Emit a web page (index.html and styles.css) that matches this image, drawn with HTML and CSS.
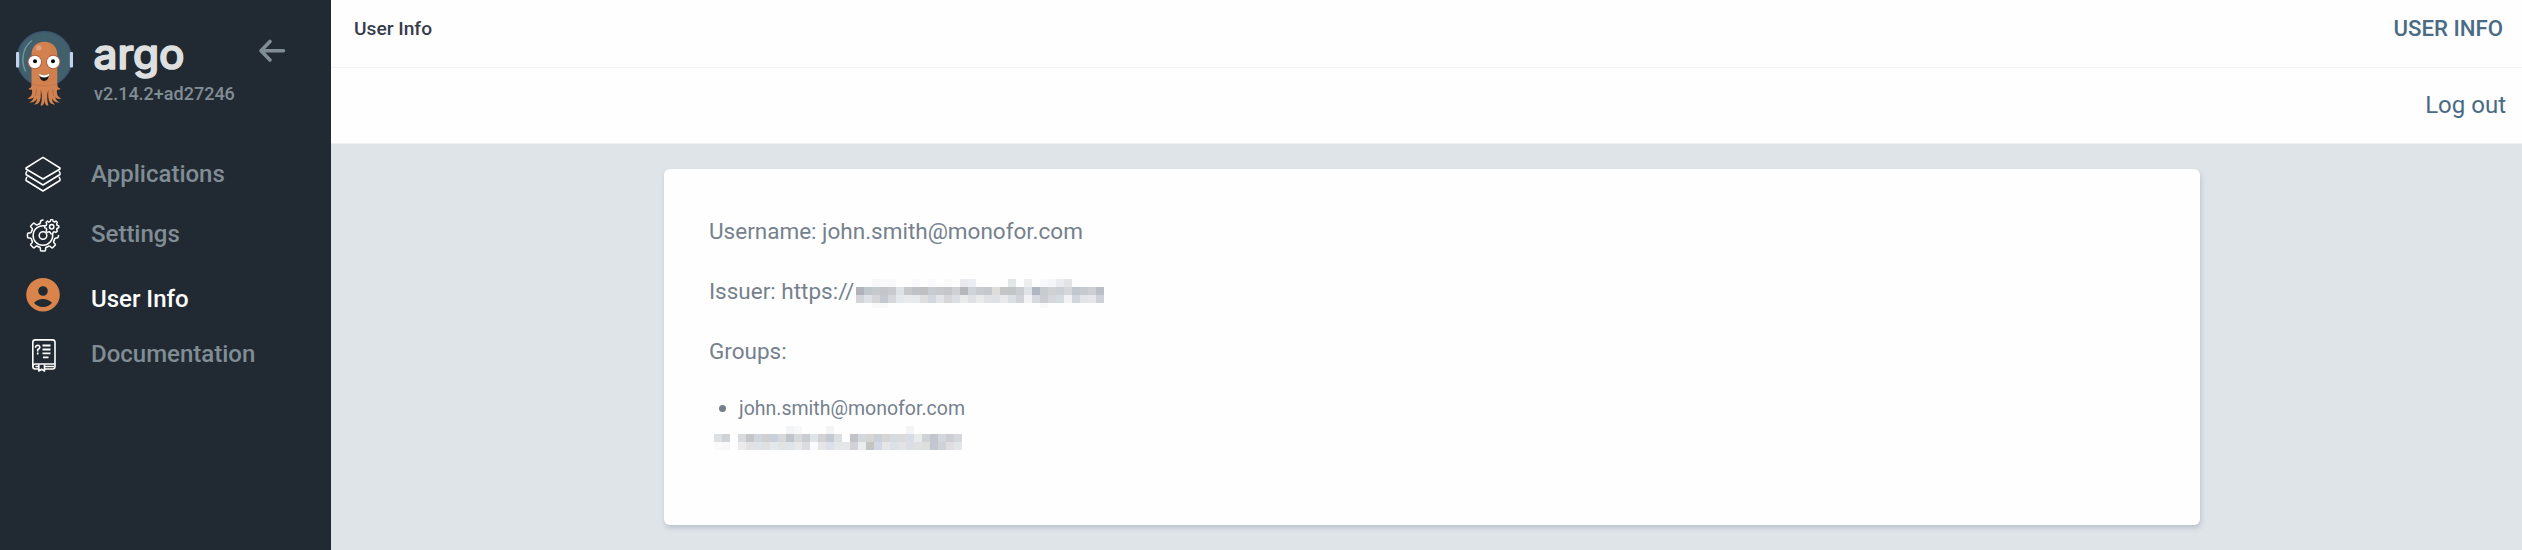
FILE: index.html
```html
<!DOCTYPE html>
<html lang="en">
<head>
<meta charset="utf-8">
<title>User Info</title>
<link rel="stylesheet" href="styles.css">
</head>
<body>
<div class="layout">
  <aside class="sidebar">
    <div class="brand">
      <svg class="mascot" viewBox="14 28 62 80">
        <circle cx="44.4" cy="59" r="27.3" fill="#425f6c" stroke="#3c5574" stroke-width="1.2"/>
        <path d="M31.5 41C22 48 21 62 25.5 71" fill="none" stroke="#6c959c" stroke-width="1.5" stroke-linecap="round"/>
        <rect x="16" y="52" width="3.2" height="15.5" rx="1" fill="#c0d2ec"/>
        <rect x="69.8" y="52" width="3.2" height="15.5" rx="1" fill="#c0d2ec"/>
        <path d="M31.5 55C31.5 47 36.500 41.800 44.300 41.800S57.300 47 57.300 55V84C57.500 87 58 88 60.500 88.500C59.500 90 58.500 90 57 89.500C56.500 94 57.500 97 61.500 98.500C58 99.500 56.500 98.500 55 97C56 100 57.500 101.500 60 102.500C56 103 53.500 101.500 52 98.500C52 101.500 53 103 55 104.500C51 104.500 49 102.500 48.500 98L47.500 91C47 97 47 102 48.500 105.500C45.500 105.800 44.500 104 44.500 98C44.500 104 43.500 105.800 40.500 105.500C42 102 42 97 41.500 91L40.500 98C40 102.500 38 104.500 34 104.500C36 103 37 101.500 37 98.500C35.500 101.500 33 103 29 102.500C31.500 101.500 33 100 34 97C32.500 98.500 31 99.500 27.300 98.500C31.500 97 32.500 94 32 89.500C30.500 90 29.500 90 28.500 88.500C31 88 31.500 87 31.500 84Z" fill="#d2814f"/>
        <path d="M49 43C53 50 50 78 40 84L57 80V54C57 48 54 44.500 49 43Z" fill="#c97a49" opacity=".35"/>
        <path d="M31.500 84Q44 87.500 57.300 84" fill="none" stroke="#bd754d" stroke-width=".8"/>
        <path d="M40.500 90V98M36.500 89L35.500 96M48.500 90V98M52.500 89L53.500 96" stroke="#a86642" stroke-width=".8"/>
        <circle cx="38.800" cy="48" r="2.800" fill="#dfa180"/>
        <circle cx="34.800" cy="62" r="7.200" fill="#bd5a3c"/>
        <circle cx="53.200" cy="62" r="7.200" fill="#bd5a3c"/>
        <circle cx="34.800" cy="62" r="6.200" fill="#fff"/>
        <circle cx="53.200" cy="62" r="6.200" fill="#fff"/>
        <circle cx="35" cy="61.300" r="2" fill="#080808"/>
        <circle cx="53" cy="61.300" r="2" fill="#080808"/>
        <path d="M39 73.500Q44 77 49.300 73.500Q48.500 81 44 81Q39.800 81 39 73.500Z" fill="#1a1414"/>
        <path d="M39 73.500Q44 77 49.300 73.500L48.800 76Q44 79 39.500 76Z" fill="#fff"/>
      </svg>
      <div class="brand-text">
        <svg class="wordmark" viewBox="0 0 94 44"><text x="-.5" y="28.500" textLength="91" lengthAdjust="spacingAndGlyphs">argo</text></svg>
        <div class="version">v2.14.2+ad27246</div>
      </div>
      <svg class="collapse" viewBox="0 0 28 26"><path d="M12 3.500L3 12.800L12 22M3.500 12.800H25.500" fill="none" stroke="#818d94" stroke-width="3.600" stroke-linecap="round" stroke-linejoin="round"/></svg>
    </div>
    <nav class="nav">
      <a class="nav-item">
        <svg class="icon" viewBox="0 0 40 40"><g fill="none" stroke="#fff" stroke-width="1.500" stroke-linejoin="round" stroke-linecap="round"><path d="M20 3.300L37 14V15L20 25L3 15V14Z"/><path d="M3.800 17.300L3 19V20.500L20 31L37 20.500V19L36.200 17.300M3.800 23.300L3 25V26.500L20 37L37 26.500V25L36.200 23.300"/></g></svg>
        <span>Applications</span>
      </a>
      <a class="nav-item">
        <svg class="icon" viewBox="0 0 40 40">
          <defs><path id="tooth" d="M-4.700 11.300Q-2.600 11.400 -2.600 13.200V14.500Q-2.600 15.500 -1.600 15.500H1.600Q2.600 15.500 2.600 14.500V13.200Q2.600 11.400 4.700 11.300"/></defs>
          <g fill="none" stroke="#fff" stroke-width="1.500" stroke-linecap="round">
            <g transform="translate(20 21.500)">
              <use href="#tooth"/><use href="#tooth" transform="rotate(45)"/><use href="#tooth" transform="rotate(90)"/><use href="#tooth" transform="rotate(135)"/><use href="#tooth" transform="rotate(315)"/>
              <path d="M-4.700 -11.300Q-2.600 -11.400 -2.600 -13.200Q-2.600 -15.500 0 -15.500M11.300 4.700Q11.400 2.600 13.200 2.600Q15.500 2.600 15.500 0M2 -9.600A9.800 9.800 0 1 0 9.600 -1.500"/>
              <circle r="3.800"/>
            </g>
            <g transform="translate(28.700 12.800)">
              <g transform="scale(.46)" stroke-width="3"><use href="#tooth"/><use href="#tooth" transform="rotate(45)"/><use href="#tooth" transform="rotate(90)"/><use href="#tooth" transform="rotate(135)"/><use href="#tooth" transform="rotate(180)"/><use href="#tooth" transform="rotate(225)"/><use href="#tooth" transform="rotate(270)"/><use href="#tooth" transform="rotate(315)"/></g>
              <circle r="2.200"/>
            </g>
          </g>
        </svg>
        <span>Settings</span>
      </a>
      <a class="nav-item active">
        <svg class="icon" viewBox="0 0 40 40"><path fill="#d8844b" fill-rule="evenodd" d="M20 3.900a16.800 16.800 0 1 0 0 33.600a16.800 16.800 0 1 0 0-33.600ZM20 12.200a4.800 4.800 0 1 1 0 9.600a4.800 4.800 0 1 1 0-9.600ZM11 28.800C13 26.300 17 25 20 25S27 26.300 29 28.800C27 31.500 24 33 20 33S13 31.500 11 28.800Z"/></svg>
        <span>User Info</span>
      </a>
      <a class="nav-item">
        <svg class="icon" viewBox="0 0 40 40"><g transform="translate(0 .5)" fill="none" stroke="#fff" stroke-width="1.600" stroke-linejoin="round"><path d="M15.800 34.500H12.300C10.600 34.500 9.800 33.500 9.800 32V8C9.800 6.500 10.600 5.400 12.300 5.400H29.500C31.200 5.400 32 6.500 32 8V32C32 33.500 31.200 34.500 29.500 34.500H21.500"/><path d="M9.800 32C9.800 30.300 10.800 29.500 12.300 29.500H32M21.500 32H31M12.500 32H15.800"/><path d="M15.800 30V36.500L18.700 34.800L21.500 36.500V30"/><path stroke-width="1.800" d="M19.500 11H27.500M19.500 15H27.500M19.500 18.800H27.500M20 22.800H25.500"/><path d="M12.600 13.200V12.200Q13 10.800 14.700 10.800Q17 11 16.800 13Q16.600 14.200 14.700 15V17M14.700 18V20"/></g></svg>
        <span>Documentation</span>
      </a>
    </nav>
  </aside>
  <main class="main">
    <header class="topbar"><span class="crumb">User Info</span><span class="page-name">User Info</span></header>
    <div class="toolbar"><a class="logout">Log out</a></div>
    <section class="content">
      <div class="card">
        <p>Username: john.smith@monofor.com</p>
        <p class="issuer">Issuer: https://<svg class="mosaic mosaic-issuer" id="issuer" viewBox="0 0 252 29"></svg></p>
        <p>Groups:</p>
        <ul><li>john.smith@monofor.com</li></ul>
        <svg class="mosaic mosaic-group" id="group" viewBox="0 0 248 24"></svg>
      </div>
    </section>
  </main>
</div>
<script src="mosaic.js"></script>
</body>
</html>
```

FILE: styles.css
```css
* { box-sizing: border-box; }
body { margin: 0; font-family: Roboto, "Liberation Sans", sans-serif; background: #dfe4e8; }
.layout { display: flex; height: 550px; overflow: hidden; }
.sidebar { flex: 0 0 331px; background: #212a33; }
.brand { display: flex; height: 144px; padding: 28px 0 0 14px; }
.mascot { width: 62px; height: 80px; flex: none; }
.brand-text { width: 166px; padding: 12px 0 0 18px; }
.wordmark { display: block; width: 94px; height: 44px; overflow: visible; }
.wordmark text { font-family: Inter, sans-serif; font-size: 41px; font-weight: 500; fill: #dedfdf; stroke: #dedfdf; stroke-width: 1.6px; stroke-linejoin: round; }
.version { margin: -1px 0 0 0; font-size: 18px; line-height: 22px; font-weight: 500; color: #818d94; white-space: nowrap; }
.collapse { width: 28px; height: 26px; margin: 10px 0 0 16px; }
.nav { display: flex; flex-direction: column; }
.nav-item { display: flex; align-items: center; gap: 28px; height: 60px; padding-left: 23px; font-size: 24px; font-weight: 500; color: #818d94; }
.nav-item.active { color: #fff; }
.nav-item.active span { padding-top: 10px; }
.icon { width: 40px; height: 40px; flex: none; }
.main { flex: 1; display: flex; flex-direction: column; min-width: 0; }
.topbar { display: flex; justify-content: space-between; height: 68px; padding: 0 19px 0 23px; background: #fefefe; border-bottom: 1px solid #eff1f2; line-height: 57px; font-weight: 500; }
.crumb { font-size: 19.2px; color: #363c4a; }
.page-name { font-size: 22.2px; color: #496b85; text-transform: uppercase; }
.toolbar { display: flex; justify-content: flex-end; height: 76px; padding-right: 16px; background: #fefefe; border-bottom: 1px solid #eff1f2; }
.logout { font-size: 24px; line-height: 75px; color: #496b85; }
.content { padding: 25px 322px 0 333px; }
.card { height: 356px; padding: 32px 45px; background: #fefefe; border-radius: 6px; box-shadow: 1px 3px 5px rgba(100, 105, 135, .28); color: #75818d; }
.card p { margin: 0; height: 60px; font-size: 22.5px; line-height: 60px; }
.issuer { display: flex; }
.card ul { margin: 10px 0 0; padding: 0 0 0 10px; font-size: 19.5px; line-height: 35px; list-style: none; }
.card li { display: flex; align-items: center; gap: 13px; }
.card li::before { content: ""; width: 7px; height: 7px; border-radius: 50%; background: #75818d; }
.mosaic { display: block; shape-rendering: crispEdges; }
.mosaic-issuer { width: 252px; height: 29px; margin: 18px 0 0 -2px; }
.mosaic-group { width: 248px; height: 24px; margin-left: 5px; }
```

FILE: mosaic.js
```js
// Each row lists 8px cells from left to right; "-" leaves a cell empty.
function mosaic(id, offset, rows) {
  const svg = document.getElementById(id);
  rows.forEach(([y, height, cells]) => {
    cells.split(' ').forEach((color, i) => {
      if (color === '-') return;
      const r = document.createElementNS('http://www.w3.org/2000/svg', 'rect');
      const attrs = { x: offset + i * 8, y, width: 8, height, fill: '#' + color };
      Object.entries(attrs).forEach(([k, v]) => r.setAttribute(k, v));
      svg.appendChild(r);
    });
  });
}
mosaic('issuer', 4, [
  [0, 8, '- - f8f8fb f9f9fb f9f9fa - - fafafc - fafafc - fafafb - ebe9ec ebeef4 - - - - e2e6e7 - eceeef - f9f8fa f3f5f9 e9ebee e2e5e5 - - - -'],
  [8, 8, 'b0b4ba c0c7cc c5cacd c4c5c9 c7cacf dce2e6 c5c9cc bfc1c4 c0bfc1 c8cbcf c6c8cc c3c5cb ced0d3 b5b7bd ccd4da c8cbd1 c5c9ce dfdcda c3c5c7 c1c5c8 c9cdd2 dce2e5 afb6c0 c8cbcf cfd1d4 cbd0d6 d5d7da bfc8cf c7cbd0 cbced2 babec7'],
  [16, 8, 'd2d4d8 dee2e6 d7d5da c3c8d0 d5d7da e5e8eb e8eaec e8e9ea dfdedf d2d6de e3e4e7 d5d6d8 dadfe5 e8ebec dee1e5 e8ebec dfe3e6 dee1e5 e7e9eb dadfe3 d0d2d8 f2f1f3 d6dae0 c9ccd0 d4d7dc d6dae1 f2f1f3 d0d5de e2e4e6 e5e6e7 cdd1d9'],
  [24, 5, '- - f9f9fa f9f9fa - - - - - - - - - - - - - - - - - - - f9f9fb - - - - - - -']
]);
mosaic('group', 0, [
  [0, 8, '- - - - - - - - - f3f4f5 f7f8fa - - - f3f4f6 - - - - - - - - - f3f4f6 - - - - - -'],
  [8, 8, 'dce0e4 cfd3d7 - d8dadd c5c6c9 d1d6dc d0d0d2 cbd1dc d6d8dc bfc5ca d6d9dc cbccd1 dee4e7 d0d2d5 c5cad2 dbdfe2 - c2c3c9 d4d8dc d5d5d4 cacfd8 d6d5d5 d6dbe2 d9dada d8dce5 e9eaeb d0d3d6 c3c6cf d3d6dc cdced3 d4d7dc'],
  [16, 8, 'fafafa f8f8f9 - ebebed e3e1e1 dfe2e6 dfe0e0 e4e8ed e1e3e4 dfe4e8 e7e8e9 dbdce0 fafbff e6e6e7 dce0e8 e5e6e8 e4e6e7 d2d2d8 e9edee c3c3c2 d2d8e3 e5e6e7 dce1e8 e2e3e4 dbdfe4 dee1e1 dddfdd c3c7d1 cfd3d7 dfdfe1 e3e6e9']
]);
```
